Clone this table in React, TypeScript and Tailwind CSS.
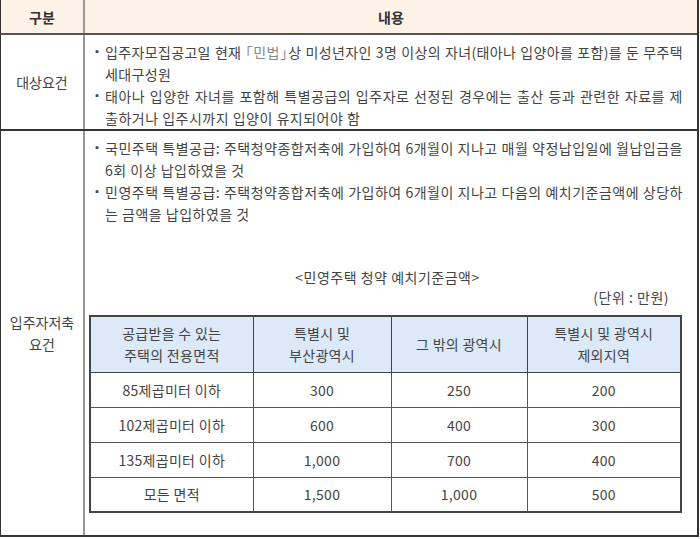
const font = { fontFamily: '"Noto Sans CJK KR", "Noto Sans", sans-serif' };

const Bullet = ({ children, tight }: { children: React.ReactNode; tight?: boolean }) => (
  <div className="flex">
    <span className="w-[13px] shrink-0 text-[10px] leading-[22px]">▪</span>
    <p className={`flex-1 text-justify ${tight ? "tracking-[0.35px]" : "tracking-[0.5px]"}`}>{children}</p>
  </div>
);

const rows = [
  ["85제곱미터 이하", "300", "250", "200"],
  ["102제곱미터 이하", "600", "400", "300"],
  ["135제곱미터 이하", "1,000", "700", "400"],
  ["모든 면적", "1,500", "1,000", "500"],
];

export default function App() {
  return (
    <div className="w-[700px] h-[539px] bg-white text-[#444] text-[14px] leading-[22px]" style={font}>
      <div className="w-[699px] border-r-2 border-b-2 border-[#333] border-l">
        {/* header */}
        <div className="flex h-[35px] bg-[#fcf2e5] border-b-2 border-[#555] font-bold text-[#333]">
          <div className="w-[84px] flex items-center justify-center border-r-2 border-[#999]">구분</div>
          <div className="flex-1 flex items-center justify-center">내용</div>
        </div>

        {/* 대상요건 */}
        <div className="flex h-[96px] border-b-2 border-[#333]">
          <div className="w-[84px] flex items-center justify-center border-r-2 border-[#999]">대상요건</div>
          <div className="flex-1 pl-[7px] pr-[14px] pt-[6px]">
            <Bullet tight>
              입주자모집공고일 현재 <span className="text-[#888]">｢민법｣</span>상 미성년자인 3명 이상의 자녀(태아나 입양아를 포함)를 둔 무주택 세대구성원
            </Bullet>
            <Bullet>태아나 입양한 자녀를 포함해 특별공급의 입주자로 선정된 경우에는 출산 등과 관련한 자료를 제출하거나 입주시까지 입양이 유지되어야 함</Bullet>
          </div>
        </div>

        {/* 입주자저축요건 */}
        <div className="flex h-[404px]">
          <div className="w-[84px] flex items-center justify-center text-center border-r-2 border-[#999]">
            입주자저축
            <br />
            요건
          </div>
          <div className="flex-1 pl-[7px] pr-[14px] pt-[6px]">
            <Bullet>국민주택 특별공급: 주택청약종합저축에 가입하여 6개월이 지나고 매월 약정납입일에 월납입금을 6회 이상 납입하였을 것</Bullet>
            <Bullet>민영주택 특별공급: 주택청약종합저축에 가입하여 6개월이 지나고 다음의 예치기준금액에 상당하는 금액을 납입하였을 것</Bullet>

            <p className="mt-[41px] text-center tracking-[0.5px]">&lt;민영주택 청약 예치기준금액&gt;</p>
            <p className="mt-[-2px] pr-[14px] text-right tracking-[0.5px]">(단위 : 만원)</p>

            <table className="mt-[7px] w-[593px] -ml-[3px] border-collapse border-2 border-[#444] text-center tracking-[0.3px]">
              <thead>
                <tr className="bg-[#dbe9f8] h-[56px]">
                  <th className="w-[163px] font-normal border border-[#444]">
                    공급받을 수 있는
                    <br />
                    주택의 전용면적
                  </th>
                  <th className="w-[138px] font-normal border border-[#444]">
                    특별시 및
                    <br />
                    부산광역시
                  </th>
                  <th className="w-[136px] font-normal border border-[#444]">그 밖의 광역시</th>
                  <th className="font-normal border border-[#444]">
                    특별시 및 광역시
                    <br />
                    제외지역
                  </th>
                </tr>
              </thead>
              <tbody>
                {rows.map((r) => (
                  <tr key={r[0]} className="h-[35px]">
                    {r.map((c, i) => (
                      <td key={i} className="border border-[#555]">
                        {c}
                      </td>
                    ))}
                  </tr>
                ))}
              </tbody>
            </table>
          </div>
        </div>
      </div>
    </div>
  );
}
